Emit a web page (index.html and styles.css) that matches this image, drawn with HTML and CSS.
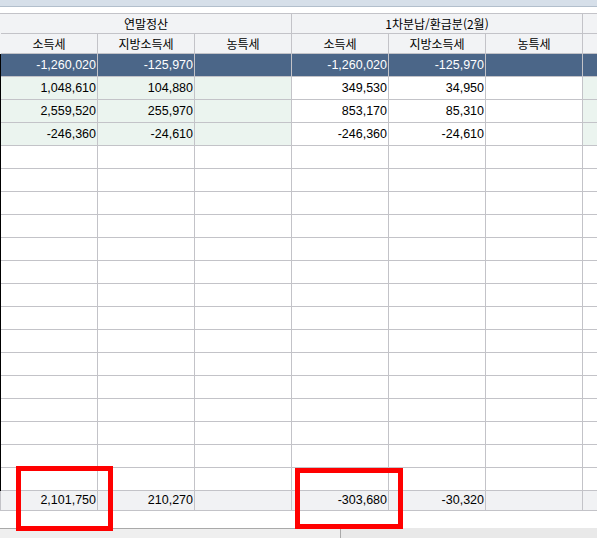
FILE: index.html
```html
<!DOCTYPE html>
<html lang="ko">
<head>
<meta charset="utf-8">
<link rel="stylesheet" href="styles.css">
</head>
<body>
<div class="screen">
  <div class="topbar"></div>
  <div class="gap"></div>
  <div class="grid">
    <div class="row hrow h1">
      <div class="cell span3">연말정산</div>
      <div class="cell span3">1차분납/환급분(2월)</div>
      <div class="cell rest"></div>
    </div>
    <div class="row hrow">
      <div class="cell">소득세</div><div class="cell">지방소득세</div><div class="cell">농특세</div>
      <div class="cell">소득세</div><div class="cell">지방소득세</div><div class="cell">농특세</div>
      <div class="cell rest"></div>
    </div>
    <div class="row drow sel">
      <div class="cell num">-1,260,020</div><div class="cell num">-125,970</div><div class="cell num"></div>
      <div class="cell num">-1,260,020</div><div class="cell num">-125,970</div><div class="cell num"></div>
      <div class="cell rest"></div>
    </div>
    <div class="row drow">
      <div class="cell num g">1,048,610</div><div class="cell num g">104,880</div><div class="cell num g"></div>
      <div class="cell num">349,530</div><div class="cell num">34,950</div><div class="cell num"></div>
      <div class="cell rest g"></div>
    </div>
    <div class="row drow">
      <div class="cell num g">2,559,520</div><div class="cell num g">255,970</div><div class="cell num g"></div>
      <div class="cell num">853,170</div><div class="cell num">85,310</div><div class="cell num"></div>
      <div class="cell rest g"></div>
    </div>
    <div class="row drow">
      <div class="cell num g">-246,360</div><div class="cell num g">-24,610</div><div class="cell num g"></div>
      <div class="cell num">-246,360</div><div class="cell num">-24,610</div><div class="cell num"></div>
      <div class="cell rest g"></div>
    </div>
    <div class="row drow"><div class="cell"></div><div class="cell"></div><div class="cell"></div><div class="cell"></div><div class="cell"></div><div class="cell"></div><div class="cell rest"></div></div>
    <div class="row drow"><div class="cell"></div><div class="cell"></div><div class="cell"></div><div class="cell"></div><div class="cell"></div><div class="cell"></div><div class="cell rest"></div></div>
    <div class="row drow"><div class="cell"></div><div class="cell"></div><div class="cell"></div><div class="cell"></div><div class="cell"></div><div class="cell"></div><div class="cell rest"></div></div>
    <div class="row drow"><div class="cell"></div><div class="cell"></div><div class="cell"></div><div class="cell"></div><div class="cell"></div><div class="cell"></div><div class="cell rest"></div></div>
    <div class="row drow"><div class="cell"></div><div class="cell"></div><div class="cell"></div><div class="cell"></div><div class="cell"></div><div class="cell"></div><div class="cell rest"></div></div>
    <div class="row drow"><div class="cell"></div><div class="cell"></div><div class="cell"></div><div class="cell"></div><div class="cell"></div><div class="cell"></div><div class="cell rest"></div></div>
    <div class="row drow"><div class="cell"></div><div class="cell"></div><div class="cell"></div><div class="cell"></div><div class="cell"></div><div class="cell"></div><div class="cell rest"></div></div>
    <div class="row drow"><div class="cell"></div><div class="cell"></div><div class="cell"></div><div class="cell"></div><div class="cell"></div><div class="cell"></div><div class="cell rest"></div></div>
    <div class="row drow"><div class="cell"></div><div class="cell"></div><div class="cell"></div><div class="cell"></div><div class="cell"></div><div class="cell"></div><div class="cell rest"></div></div>
    <div class="row drow"><div class="cell"></div><div class="cell"></div><div class="cell"></div><div class="cell"></div><div class="cell"></div><div class="cell"></div><div class="cell rest"></div></div>
    <div class="row drow"><div class="cell"></div><div class="cell"></div><div class="cell"></div><div class="cell"></div><div class="cell"></div><div class="cell"></div><div class="cell rest"></div></div>
    <div class="row drow"><div class="cell"></div><div class="cell"></div><div class="cell"></div><div class="cell"></div><div class="cell"></div><div class="cell"></div><div class="cell rest"></div></div>
    <div class="row drow"><div class="cell"></div><div class="cell"></div><div class="cell"></div><div class="cell"></div><div class="cell"></div><div class="cell"></div><div class="cell rest"></div></div>
    <div class="row drow"><div class="cell"></div><div class="cell"></div><div class="cell"></div><div class="cell"></div><div class="cell"></div><div class="cell"></div><div class="cell rest"></div></div>
    <div class="row drow"><div class="cell"></div><div class="cell"></div><div class="cell"></div><div class="cell"></div><div class="cell"></div><div class="cell"></div><div class="cell rest"></div></div>
    <div class="row frow">
      <div class="cell num">2,101,750</div><div class="cell num">210,270</div><div class="cell num"></div>
      <div class="cell num">-303,680</div><div class="cell num">-30,320</div><div class="cell num"></div>
      <div class="cell rest"></div>
    </div>
  </div>
  <div class="below"></div>
  <div class="scroll"><div class="thumb"></div></div>
  <div class="mark mark-a"></div>
  <div class="mark mark-b"></div>
</div>
</body>
</html>
```

FILE: styles.css
```css
html, body {
  margin: 0;
  padding: 0;
  background: #ffffff;
}
.screen {
  position: relative;
  width: 597px;
  height: 538px;
  overflow: hidden;
  font-family: "Noto Sans CJK KR", "DejaVu Sans", sans-serif;
  color: #000;
}
.topbar {
  height: 6px;
  background: #d6dfe9;
  border-bottom: 1px solid #b3bfcc;
}
.gap {
  height: 6px;
}
.grid {
  width: 620px;
  border-top: 1px solid #c3c3c8;
}
.row {
  display: flex;
  border-left: 1px solid #c3c3c8;
}
.cell {
  box-sizing: border-box;
  width: 97px;
  flex: none;
  border-right: 1px solid #c3c3c8;
  border-bottom: 1px solid #c3c3c8;
  white-space: nowrap;
  overflow: hidden;
}
.cell.rest {
  flex: 1 1 auto;
  width: auto;
}
.cell.span3 {
  width: 291px;
}
.hrow {
  border-left-color: #f2f3f5;
}
.hrow .cell {
  height: 20px;
  background: #f2f3f5;
  font-size: 12px;
  line-height: 19px;
  text-align: center;
}
.drow {
  border-left-color: #000;
}
.drow .cell {
  height: 23px;
  background: #ffffff;
}
.num {
  text-align: right;
  padding-right: 1px;
  font-family: "Liberation Sans", "DejaVu Sans", sans-serif;
  font-size: 12.5px;
  line-height: 22px;
}
.drow .cell.g {
  background: #ebf4ef;
}
.drow.sel .cell {
  background: #4b6688;
  color: #ffffff;
}
.frow .cell {
  height: 20px;
  background: #f1f2f4;
  line-height: 19px;
}
.below {
  height: 17px;
}
.scroll {
  height: 10px;
  background: #e9e9e9;
}
.thumb {
  width: 341px;
  height: 10px;
  box-sizing: border-box;
  background: #efefef;
  border-top: 1px solid #a9a9a9;
  border-right: 1px solid #a9a9a9;
}
.mark {
  position: absolute;
  box-sizing: border-box;
  border: 5px solid #ff0000;
}
.mark-a {
  left: 16px;
  top: 466px;
  width: 97px;
  height: 65px;
}
.mark-b {
  left: 295px;
  top: 468px;
  width: 108px;
  height: 61px;
}
```
